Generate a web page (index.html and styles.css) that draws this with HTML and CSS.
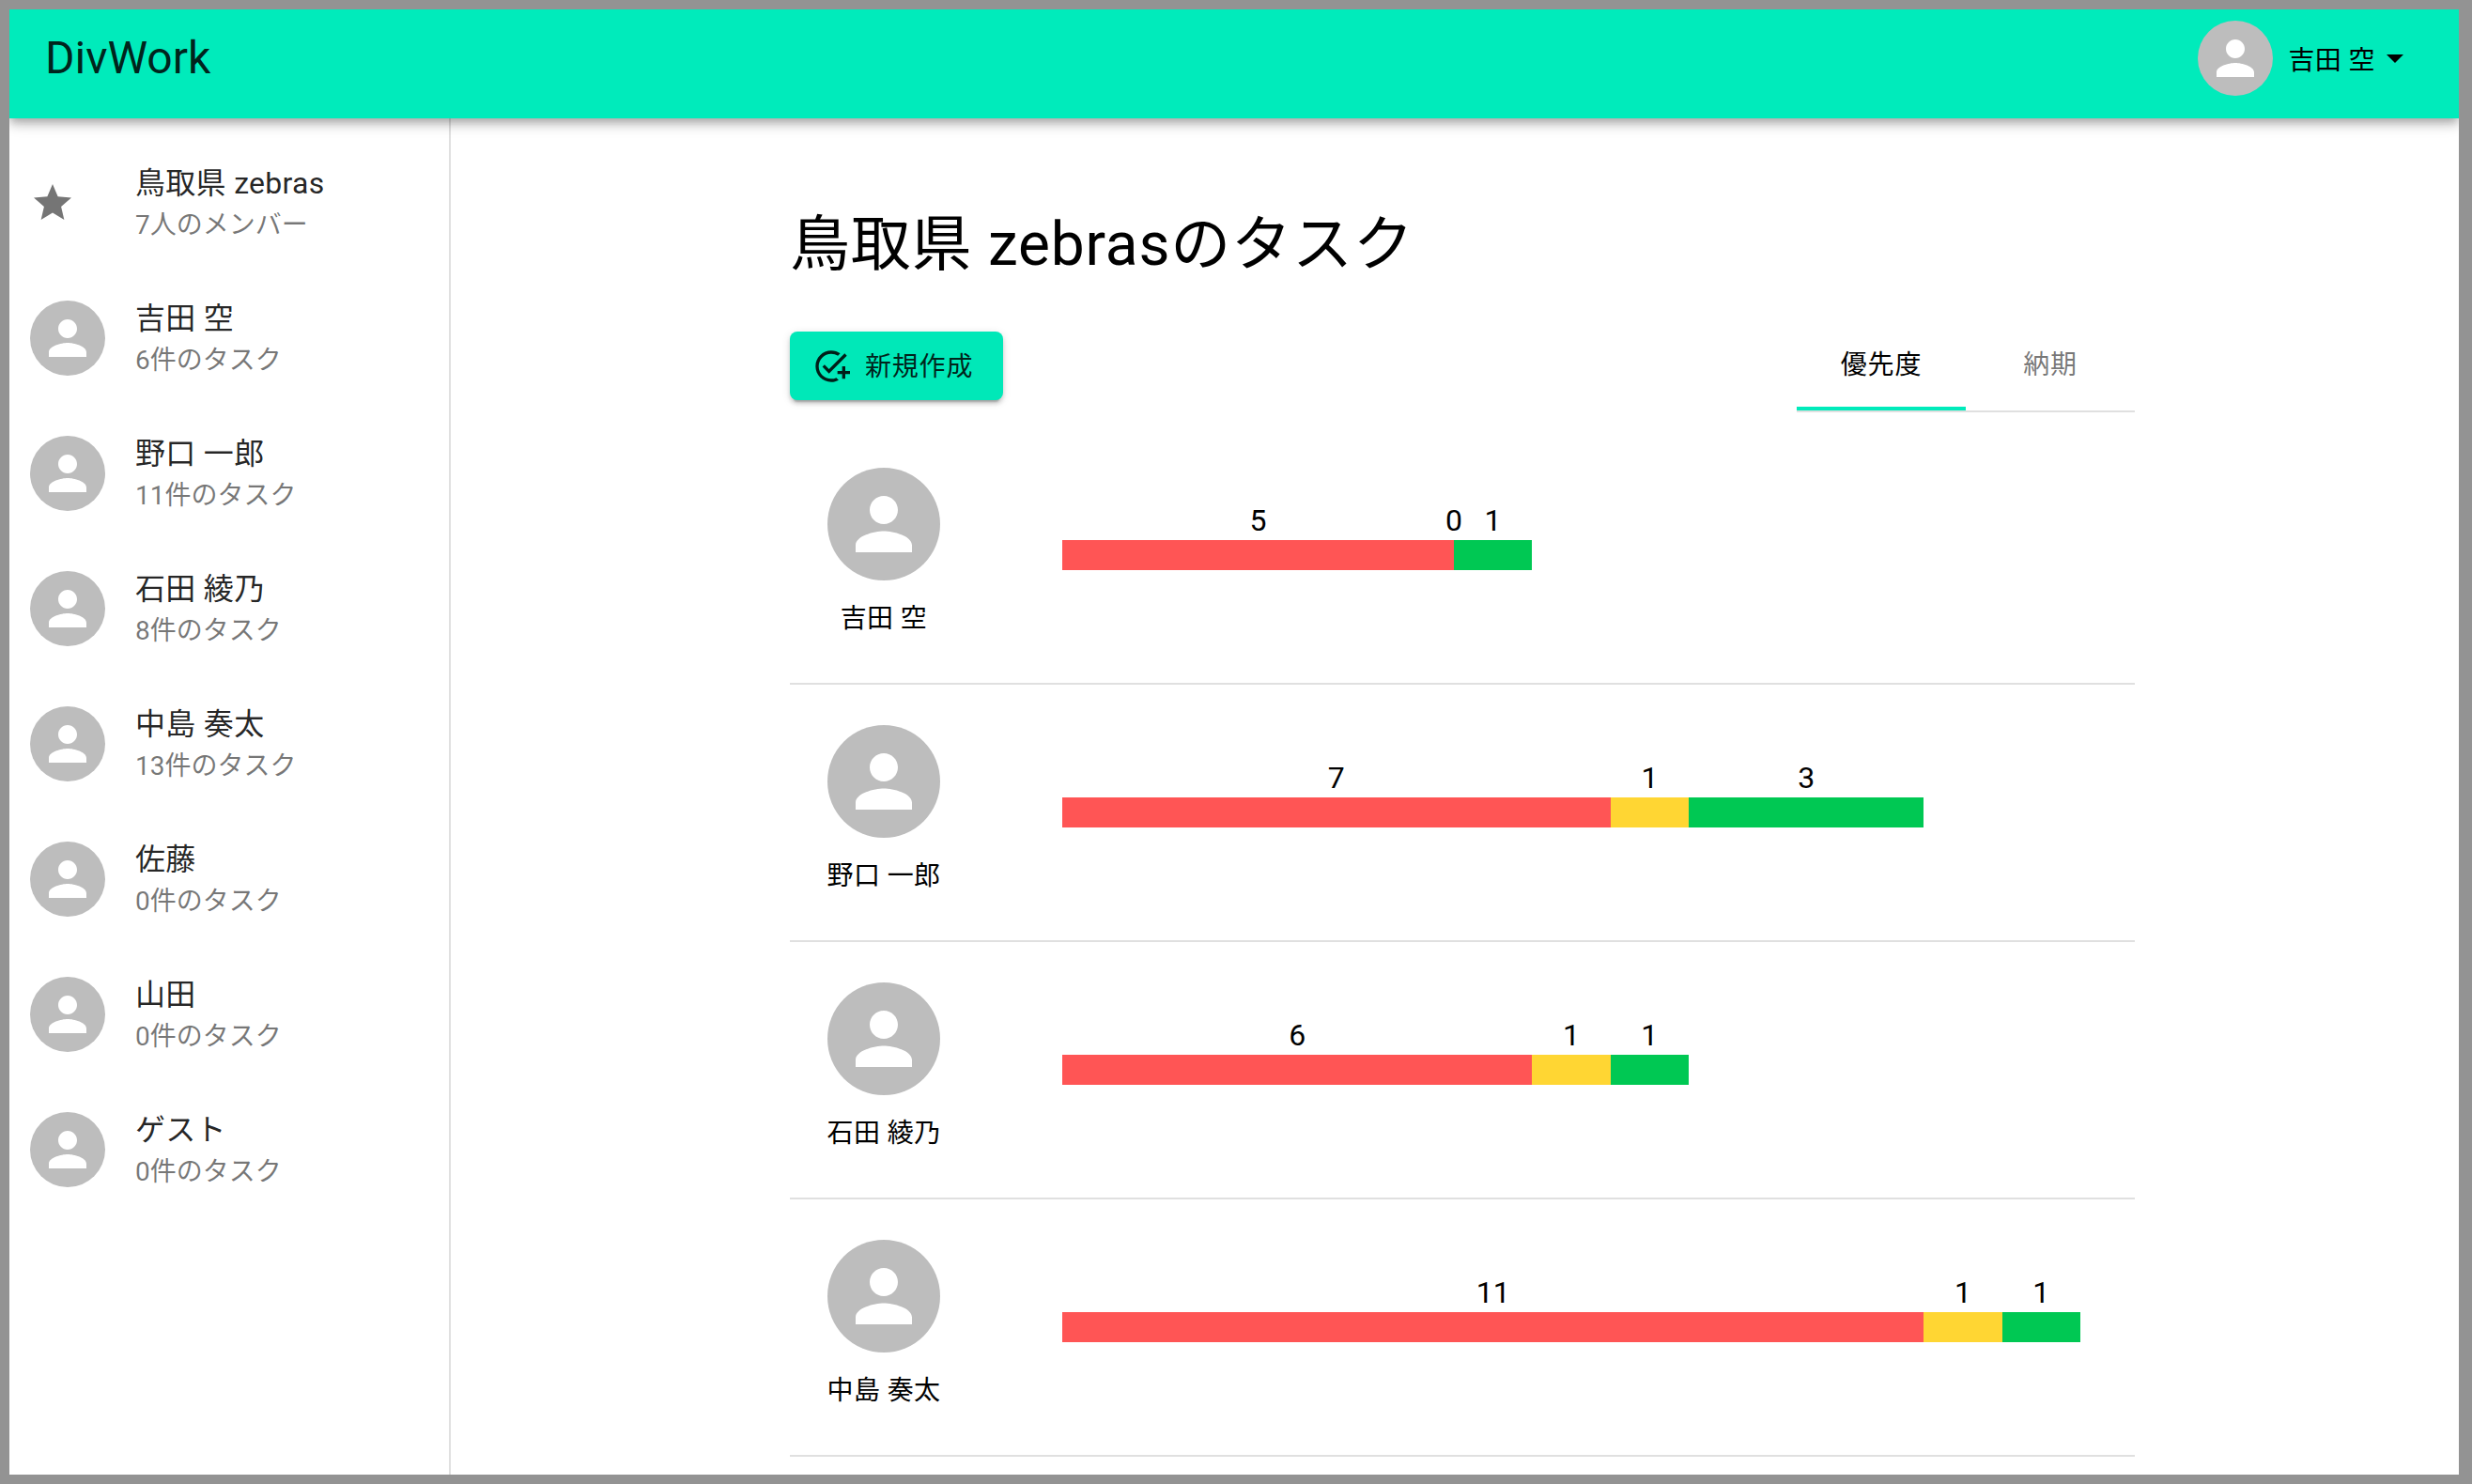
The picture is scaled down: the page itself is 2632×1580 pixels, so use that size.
FILE: index.html
```html
<!DOCTYPE html>
<html lang="ja">
<head>
    <meta charset="UTF-8">
    <title>DivWork</title>
    <link rel="stylesheet" href="styles.css">
</head>
<body>
    <svg class="icon-defs" aria-hidden="true">
        <symbol id="person" viewBox="0 0 24 24">
            <path d="M12 12c2.21 0 4-1.79 4-4s-1.79-4-4-4-4 1.79-4 4 1.79 4 4 4zm0 2c-2.67 0-8 1.34-8 4v2h16v-2c0-2.66-5.33-4-8-4z"/>
        </symbol>
    </svg>

    <div class="app">
        <header class="topbar">
            <div class="brand">DivWork</div>
            <div class="account">
                <div class="avatar"><svg><use href="#person"/></svg></div>
                <span class="account-name">吉田 空</span>
                <svg class="caret" viewBox="7 10 10 5"><path d="M7 10l5 5 5-5z"/></svg>
            </div>
        </header>

        <div class="workspace">
            <!-- Team and members -->
            <nav class="sidebar">
                <div class="member">
                    <div class="member-icon">
                        <svg class="star" viewBox="0 0 24 24"><path d="M12 17.27L18.18 21l-1.64-7.03L22 9.24l-7.19-.61L12 2 9.19 8.63 2 9.24l5.46 4.73L5.82 21z"/></svg>
                    </div>
                    <div class="member-text">
                        <div class="member-name">鳥取県 zebras</div>
                        <div class="member-sub">7人のメンバー</div>
                    </div>
                </div>
                <div class="member">
                    <div class="member-icon"><div class="avatar"><svg><use href="#person"/></svg></div></div>
                    <div class="member-text">
                        <div class="member-name">吉田 空</div>
                        <div class="member-sub">6件のタスク</div>
                    </div>
                </div>
                <div class="member">
                    <div class="member-icon"><div class="avatar"><svg><use href="#person"/></svg></div></div>
                    <div class="member-text">
                        <div class="member-name">野口 一郎</div>
                        <div class="member-sub">11件のタスク</div>
                    </div>
                </div>
                <div class="member">
                    <div class="member-icon"><div class="avatar"><svg><use href="#person"/></svg></div></div>
                    <div class="member-text">
                        <div class="member-name">石田 綾乃</div>
                        <div class="member-sub">8件のタスク</div>
                    </div>
                </div>
                <div class="member">
                    <div class="member-icon"><div class="avatar"><svg><use href="#person"/></svg></div></div>
                    <div class="member-text">
                        <div class="member-name">中島 奏太</div>
                        <div class="member-sub">13件のタスク</div>
                    </div>
                </div>
                <div class="member">
                    <div class="member-icon"><div class="avatar"><svg><use href="#person"/></svg></div></div>
                    <div class="member-text">
                        <div class="member-name">佐藤</div>
                        <div class="member-sub">0件のタスク</div>
                    </div>
                </div>
                <div class="member">
                    <div class="member-icon"><div class="avatar"><svg><use href="#person"/></svg></div></div>
                    <div class="member-text">
                        <div class="member-name">山田</div>
                        <div class="member-sub">0件のタスク</div>
                    </div>
                </div>
                <div class="member">
                    <div class="member-icon"><div class="avatar"><svg><use href="#person"/></svg></div></div>
                    <div class="member-text">
                        <div class="member-name">ゲスト</div>
                        <div class="member-sub">0件のタスク</div>
                    </div>
                </div>
            </nav>

            <main class="content">
                <h1 class="page-title">鳥取県 zebrasのタスク</h1>

                <div class="toolbar">
                    <button class="new-btn">
                        <svg viewBox="0 0 24 24"><path d="M22 5.18L10.59 16.6l-4.24-4.24 1.41-1.41 2.83 2.83 10-10L22 5.18zM12 20c-4.41 0-8-3.59-8-8s3.59-8 8-8c1.57 0 3.04.46 4.28 1.25l1.45-1.45C16.1 2.67 14.13 2 12 2 6.48 2 2 6.48 2 12s4.48 10 10 10c1.73 0 3.36-.44 4.78-1.22l-1.5-1.5c-1 .46-2.11.72-3.28.72zM19 15h-3v2h3v3h2v-3h3v-2h-3v-3h-2v3z"/></svg>
                        <span class="new-btn-label">新規作成</span>
                    </button>
                    <div class="tabs">
                        <div class="tab active">優先度</div>
                        <div class="tab">納期</div>
                    </div>
                </div>

                <!-- Bar widths are share of the largest total (13 tasks) -->
                <section class="task-row">
                    <div class="assignee">
                        <div class="avatar avatar-lg"><svg><use href="#person"/></svg></div>
                        <div class="assignee-name">吉田 空</div>
                    </div>
                    <div class="stack">
                        <div class="seg high" style="width: 38.46%"><span>5</span><i></i></div>
                        <div class="seg mid" style="width: 0%"><span>0</span><i></i></div>
                        <div class="seg low" style="width: 7.69%"><span>1</span><i></i></div>
                    </div>
                </section>

                <section class="task-row">
                    <div class="assignee">
                        <div class="avatar avatar-lg"><svg><use href="#person"/></svg></div>
                        <div class="assignee-name">野口 一郎</div>
                    </div>
                    <div class="stack">
                        <div class="seg high" style="width: 53.85%"><span>7</span><i></i></div>
                        <div class="seg mid" style="width: 7.69%"><span>1</span><i></i></div>
                        <div class="seg low" style="width: 23.08%"><span>3</span><i></i></div>
                    </div>
                </section>

                <section class="task-row">
                    <div class="assignee">
                        <div class="avatar avatar-lg"><svg><use href="#person"/></svg></div>
                        <div class="assignee-name">石田 綾乃</div>
                    </div>
                    <div class="stack">
                        <div class="seg high" style="width: 46.15%"><span>6</span><i></i></div>
                        <div class="seg mid" style="width: 7.69%"><span>1</span><i></i></div>
                        <div class="seg low" style="width: 7.69%"><span>1</span><i></i></div>
                    </div>
                </section>

                <section class="task-row">
                    <div class="assignee">
                        <div class="avatar avatar-lg"><svg><use href="#person"/></svg></div>
                        <div class="assignee-name">中島 奏太</div>
                    </div>
                    <div class="stack">
                        <div class="seg high" style="width: 84.62%"><span>11</span><i></i></div>
                        <div class="seg mid" style="width: 7.69%"><span>1</span><i></i></div>
                        <div class="seg low" style="width: 7.69%"><span>1</span><i></i></div>
                    </div>
                </section>
            </main>
        </div>
    </div>
</body>
</html>
```

FILE: styles.css
```css
* {
    box-sizing: border-box;
}

body {
    margin: 0;
    padding: 10px 14px 10px 10px;
    background-color: #939393;
    font-family: Roboto, "Noto Sans CJK JP", sans-serif;
    color: #000;
}

.icon-defs {
    display: none;
}

.app {
    display: flex;
    flex-direction: column;
    height: 1560px;
    overflow: hidden;
    background-color: #fff;
}

/* Top bar */
.topbar {
    position: relative;
    z-index: 2;
    display: flex;
    flex: none;
    align-items: center;
    justify-content: space-between;
    height: 116px;
    padding: 0 59px 12px 38px;
    background-color: #00ebbb;
    box-shadow: 0 4px 8px -2px rgba(0, 0, 0, 0.2), 0 8px 10px rgba(0, 0, 0, 0.14), 0 2px 20px rgba(0, 0, 0, 0.12);
}

.brand {
    margin-bottom: 2px;
    font-size: 48px;
    color: rgba(0, 0, 0, 0.87);
}

.account {
    display: flex;
    align-items: center;
    font-size: 28px;
}

.account-name {
    margin-left: 16px;
    letter-spacing: 0.4px;
}

.caret {
    width: 18px;
    height: 9px;
    margin-left: 12px;
}

/* Avatars */
.avatar {
    display: flex;
    flex: none;
    align-items: center;
    justify-content: center;
    width: 80px;
    height: 80px;
    border-radius: 50%;
    background-color: #bdbdbd;
}

.avatar svg {
    width: 60px;
    height: 60px;
    fill: #fff;
}

.avatar-lg {
    width: 120px;
    height: 120px;
}

.avatar-lg svg {
    width: 90px;
    height: 90px;
}

/* Sidebar */
.workspace {
    display: flex;
    flex: 1;
    min-height: 0;
}

.sidebar {
    flex: none;
    width: 470px;
    padding-top: 18px;
    border-right: 2px solid #e0e0e0;
}

.member {
    display: flex;
    align-items: center;
    height: 144px;
    padding-left: 22px;
}

.member-icon {
    flex: none;
    width: 112px;
}

.member-text {
    padding-top: 1px;
}

.star {
    display: block;
    width: 48px;
    height: 48px;
    fill: #757575;
}

.member-name {
    margin-bottom: 2px;
    font-size: 32px;
    line-height: 44px;
    letter-spacing: 0.3px;
    color: rgba(0, 0, 0, 0.87);
}

.member-sub {
    font-size: 28px;
    line-height: 42px;
    color: rgba(0, 0, 0, 0.54);
}

/* Main column */
.content {
    flex: 1;
    min-width: 0;
    padding: 95px 345px 0 361px;
}

.page-title {
    margin: 0;
    font-size: 64px;
    font-weight: 400;
    line-height: 80px;
    letter-spacing: 0.8px;
}

.toolbar {
    display: flex;
    align-items: flex-end;
    justify-content: space-between;
    margin-top: 42px;
    margin-bottom: 16px;
}

.new-btn {
    display: flex;
    align-items: center;
    gap: 16px;
    height: 73px;
    margin-bottom: 13px;
    padding: 0 32px 0 24px;
    border: none;
    border-radius: 8px;
    background-color: #00e8b8;
    box-shadow: 0 6px 2px -4px rgba(0, 0, 0, 0.2), 0 4px 4px rgba(0, 0, 0, 0.14), 0 2px 10px rgba(0, 0, 0, 0.12);
    font-family: inherit;
    font-size: 28px;
    letter-spacing: 0.8px;
    color: rgba(0, 0, 0, 0.87);
}

.new-btn svg {
    width: 40px;
    height: 40px;
    fill: currentColor;
}

.new-btn-label {
    margin-bottom: 3px;
}

.tabs {
    display: flex;
    border-bottom: 2px solid #e0e0e0;
}

.tab {
    width: 180px;
    padding: 26px 0 24px;
    border-bottom: 4px solid transparent;
    font-size: 28px;
    line-height: 40px;
    letter-spacing: 0.8px;
    text-align: center;
    color: rgba(0, 0, 0, 0.54);
}

.tab.active {
    border-bottom-color: #00ebbb;
    color: #000;
}

/* Task rows */
.task-row {
    display: flex;
    height: 274px;
    padding-top: 43px;
    border-bottom: 2px solid #e0e0e0;
}

.assignee {
    flex: none;
    display: flex;
    flex-direction: column;
    align-items: center;
    width: 200px;
    margin-right: 90px;
}

.assignee-name {
    margin-top: 21px;
    font-size: 28px;
    line-height: 40px;
    letter-spacing: 0.4px;
}

.stack {
    display: flex;
    align-items: flex-start;
    width: 1084px;
    margin-top: 36px;
}

.seg {
    display: flex;
    flex-direction: column;
    align-items: center;
    font-size: 32px;
}

.seg span {
    line-height: 40px;
    margin-bottom: 1px;
}

.seg i {
    display: block;
    width: 100%;
    height: 32px;
}

.high i {
    background-color: #ff5555;
}

.mid i {
    background-color: #ffd633;
}

.low i {
    background-color: #00c853;
}
```
